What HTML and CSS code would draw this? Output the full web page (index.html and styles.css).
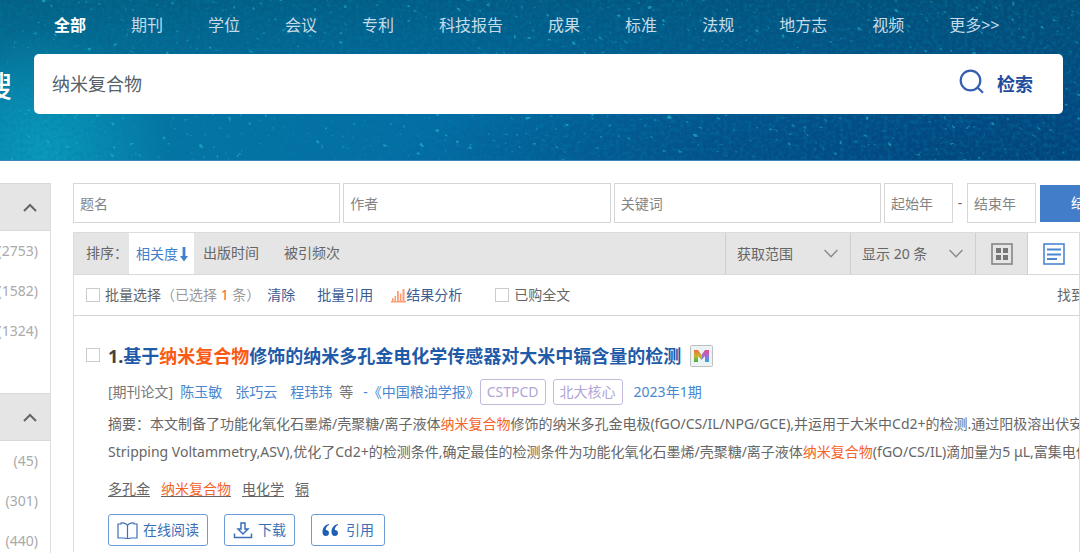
FILE: index.html
```html
<!DOCTYPE html>
<html lang="zh-CN">
<head>
<meta charset="utf-8">
<meta name="viewport" content="width=device-width, initial-scale=1">
<title>纳米复合物</title>
<link rel="stylesheet" href="styles.css">
</head>
<body>
<header class="hero">
  <svg class="hero-texture" aria-hidden="true">
    <filter id="specks" x="0" y="0" width="100%" height="100%">
      <feTurbulence type="fractalNoise" baseFrequency="0.16 0.24" numOctaves="2" seed="7"/>
      <feColorMatrix values="0 0 0 0 0.03  0 0 0 0 0.62  0 0 0 0 0.7  8 0 0 0 -5.5"/>
    </filter>
    <filter id="shade" x="0" y="0" width="100%" height="100%">
      <feTurbulence type="fractalNoise" baseFrequency="0.25" numOctaves="3" seed="3"/>
      <feColorMatrix values="0 0 0 0 0  0 0 0 0 0.2  0 0 0 0 0.38  0 1 0 0 -0.42"/>
    </filter>
    <rect width="100%" height="100%" filter="url(#shade)"/>
    <g transform="rotate(28)"><rect x="-50" y="-560" width="1300" height="900" filter="url(#specks)" opacity="0.5"/></g>
  </svg>
  <nav class="types">
    <a class="type type-active" href="#">全部</a>
    <a class="type" href="#">期刊</a>
    <a class="type" href="#">学位</a>
    <a class="type" href="#">会议</a>
    <a class="type" href="#">专利</a>
    <a class="type" href="#">科技报告</a>
    <a class="type" href="#">成果</a>
    <a class="type" href="#">标准</a>
    <a class="type" href="#">法规</a>
    <a class="type" href="#">地方志</a>
    <a class="type" href="#">视频</a>
    <a class="type" href="#">更多&gt;&gt;</a>
  </nav>
  <div class="search-row">
    <span class="search-label">搜</span>
    <form class="search-box">
      <input class="search-input" type="text" aria-label="检索词" value="纳米复合物">
      <button class="search-button" type="button">
        <svg width="26" height="26" viewBox="0 0 26 26" fill="none" stroke="#355fae" stroke-width="2.2"><circle cx="11.5" cy="11.5" r="9.8"/><path d="M18.5 18.5l5.5 5.3"/></svg>
        <span>检索</span>
      </button>
    </form>
  </div>
</header>

<div class="page">
  <aside class="sidebar">
    <section class="facet">
      <button class="facet-head" type="button" aria-label="收起">
        <svg width="14" height="9" viewBox="0 0 14 9" fill="none" stroke="#666" stroke-width="2"><path d="M1 8l6-6 6 6"/></svg>
      </button>
      <ul class="facet-list"><li>(2753)</li><li>(1582)</li><li>(1324)</li></ul>
    </section>
    <section class="facet">
      <button class="facet-head" type="button" aria-label="收起">
        <svg width="14" height="9" viewBox="0 0 14 9" fill="none" stroke="#666" stroke-width="2"><path d="M1 8l6-6 6 6"/></svg>
      </button>
      <ul class="facet-list"><li>(45)</li><li>(301)</li><li>(440)</li></ul>
    </section>
  </aside>

  <main class="main">
    <form class="refine">
      <input class="field" type="text" placeholder="题名" aria-label="题名">
      <input class="field" type="text" placeholder="作者" aria-label="作者">
      <input class="field" type="text" placeholder="关键词" aria-label="关键词">
      <input class="field field-year" type="text" placeholder="起始年" aria-label="起始年">
      <span class="dash">-</span>
      <input class="field field-year" type="text" placeholder="结束年" aria-label="结束年">
      <button class="refine-button" type="button">结果中检索</button>
    </form>

    <div class="panel">
      <div class="toolbar">
        <span class="sort-label">排序：</span>
        <a class="sort sort-active" href="#">相关度<svg width="8" height="16" viewBox="0 0 8 16" fill="#4080cc"><path d="M2.6 1h2.8v9H8l-4 5.5L0 10h2.6z"/></svg></a>
        <a class="sort" href="#">出版时间</a>
        <a class="sort" href="#">被引频次</a>
        <div class="toolbar-right">
          <div class="pick">
            <select aria-label="获取范围"><option>获取范围</option></select>
            <svg width="14" height="9" viewBox="0 0 14 9" fill="none" stroke="#8a8a8a" stroke-width="1.4"><path d="M.5 1L7 7.700l6.500-6.700"/></svg>
          </div>
          <div class="pick">
            <select aria-label="显示条数"><option>显示 20 条</option></select>
            <svg width="14" height="9" viewBox="0 0 14 9" fill="none" stroke="#8a8a8a" stroke-width="1.4"><path d="M.5 1L7 7.700l6.500-6.700"/></svg>
          </div>
          <button class="view" type="button" aria-label="网格">
            <svg width="22" height="22" viewBox="0 0 22 22"><rect x="1" y="1" width="20" height="20" fill="none" stroke="#858585" stroke-width="1.600"/><path fill="#777" d="M5 5h5v5H5zM12 5h5v5h-5zM5 12h5v5H5zM12 12h5v5h-5z"/></svg>
          </button>
          <button class="view view-active" type="button" aria-label="列表">
            <svg width="22" height="22" viewBox="0 0 22 22" fill="none" stroke="#4a86d2"><rect x="1" y="1" width="20" height="20" stroke-width="1.600"/><path stroke-width="2" d="M4 6.500h14M4 11.500h14M4 16h10"/></svg>
          </button>
        </div>
      </div>

      <div class="batch">
        <label class="check"><input type="checkbox"><span>批量选择</span></label>
        <span class="chosen">（已选择 <b>1</b> 条）</span>
        <a class="batch-link batch-clear" href="#">清除</a>
        <a class="batch-link batch-cite" href="#">批量引用</a>
        <a class="batch-link batch-stats" href="#"><svg width="15" height="15" viewBox="0 0 15 15" fill="#ff9b75"><path d="M0 13h15v1.500H0zM1 10h1.500v3H1zM3.500 8H5v5H3.500zM6 3h1.800v10H6zM8.800 5.500h1.600V13H8.800zM11.500 1h2v12h-2z"/></svg>结果分析</a>
        <label class="check check-owned"><input type="checkbox"><span>已购全文</span></label>
        <span class="found">找到</span>
      </div>

      <article class="result">
        <input class="result-check" type="checkbox" aria-label="选择">
        <div class="result-body">
          <h2 class="title"><span class="number">1.</span><a href="#">基于<em>纳米复合物</em>修饰的纳米多孔金电化学传感器对大米中镉含量的检测</a>
            <svg class="badge" width="23" height="22" viewBox="0 0 23 22"><defs><linearGradient id="warm" x1="0" y1="0" x2="0" y2="1"><stop stop-color="#f06a3c"/><stop offset=".5" stop-color="#c9b52c"/><stop offset="1" stop-color="#38b24a"/></linearGradient><linearGradient id="cool" x1="0" y1="0" x2="0" y2="1"><stop stop-color="#e04e8c"/><stop offset=".5" stop-color="#a66bd0"/><stop offset="1" stop-color="#27a9df"/></linearGradient></defs><rect x=".5" y=".5" width="22" height="21" rx="1" fill="#edf2f5" stroke="#bcc0c3"/><path fill="url(#warm)" d="M4 5h4l3.500 5v5L8 11v6H4z"/><path fill="url(#cool)" d="M19 5h-4l-3.500 5v5L15 11v6h4z"/></svg>
          </h2>
          <div class="meta">
            <span class="kind">[期刊论文]</span>
            <span class="authors"><a href="#">陈玉敏</a><a href="#">张巧云</a><a href="#">程玮玮</a></span>
            <span class="others">等</span>
            <a class="journal" href="#">-《中国粮油学报》</a>
            <span class="tag">CSTPCD</span>
            <span class="tag">北大核心</span>
            <a class="issue" href="#">2023年1期</a>
          </div>
          <p class="abstract">摘要：本文制备了功能化氧化石墨烯/壳聚糖/离子液体<em>纳米复合物</em>修饰的纳米多孔金电极(fGO/CS/IL/NPG/GCE),并运用于大米中Cd2+的检测.通过阳极溶出伏安法<br>Stripping Voltammetry,ASV),优化了Cd2+的检测条件,确定最佳的检测条件为功能化氧化石墨烯/壳聚糖/离子液体<em>纳米复合物</em>(fGO/CS/IL)滴加量为5 μL,富集电位</p>
          <div class="keywords"><a href="#">多孔金</a><a href="#"><em>纳米复合物</em></a><a href="#">电化学</a><a href="#">镉</a></div>
          <div class="actions">
            <button class="action" type="button"><svg width="21" height="17" viewBox="0 0 21 17" fill="none" stroke="#3a70b8" stroke-width="1.200"><path d="M10.500 3.500C9 1 5 .500 4 1v1H1v14h6c1.500 0 2.500.500 3.500 1 1-.500 2-1 3.500-1h6V2h-3V1c-1-.500-5 0-6.500 2.500zM10.500 3.500V16.500"/></svg>在线阅读</button>
            <button class="action" type="button"><svg width="20" height="17" viewBox="0 0 20 17" fill="none" stroke="#3a70b8" stroke-width="1.500"><path d="M8 1h4v6h3l-5 5-5-5h3zM1.500 11.500v4h17v-4"/></svg>下载</button>
            <button class="action action-cite" type="button"><svg width="17" height="14" viewBox="0 0 17 14" fill="#1f5fb4"><path d="M7 1C2.500 2 .500 5 .500 9c0 2.600 1.300 4 3.300 4 1.900 0 3.200-1.300 3.200-3.100C7 8 5.600 7 3.800 7 3.800 4.500 5 3 7 2z"/><path d="M16 1c-4.500 1-6.500 4-6.500 8 0 2.600 1.300 4 3.300 4 1.900 0 3.200-1.300 3.200-3.100C16 8 14.600 7 12.800 7c0-2.500 1.200-4 3.200-5z"/></svg>引用</button>
          </div>
        </div>
      </article>
    </div>
  </main>
</div>
</body>
</html>
```

FILE: styles.css
```css
* { box-sizing: border-box; }
body {
  margin: 0;
  overflow: hidden;
  background: #fff;
  color: #666;
  font: 14px/20px "Noto Sans", "Noto Sans CJK SC", sans-serif;
}
a { color: inherit; text-decoration: none; }
button, input, select { font: inherit; color: inherit; border-radius: 0; }
button { cursor: pointer; }
em { color: #f5632a; font-style: normal; }
svg { flex: none; }

.hero {
  position: relative;
  padding-bottom: 46px;
  border-bottom: 1px solid #3b86b4;
  background:
    radial-gradient(circle at 4% 96%, #0a9abb 0, rgba(10, 154, 187, 0) 12%),
    radial-gradient(ellipse at 100% 100%, #02447c 0, rgba(2, 68, 124, 0) 45%),
    linear-gradient(rgba(0, 76, 104, .5), rgba(0, 76, 104, 0) 70%),
    linear-gradient(90deg, #0678a2, #036da4 40%, #045a92 72%, #044c84);
}
.hero-texture { position: absolute; inset: 0; width: 100%; height: 100%; }
.types {
  position: relative;
  display: flex;
  gap: 45px;
  padding: 13px 0 17px 54px;
  color: #c5dce8;
  font-size: 16px;
  line-height: 24px;
  white-space: nowrap;
}
.type-active { color: #fff; font-weight: 700; }
.search-row { position: relative; display: flex; align-items: center; padding-right: 17px; }
.search-label {
  display: flex;
  justify-content: flex-end;
  flex: none;
  width: 12px;
  margin-right: 22px;
  padding-top: 4px;
  overflow: hidden;
  color: #fff;
  font-size: 30px;
  font-weight: 500;
  line-height: 40px;
}
.search-box { display: flex; flex: 1; height: 60px; overflow: hidden; border-radius: 5px; background: #fff; }
.search-input { flex: 1; min-width: 0; padding: 0 18px; border: 0; outline: 0; background: none; color: #555f69; font-size: 18px; }
.search-button {
  display: flex;
  align-items: center;
  gap: 12px;
  padding: 0 30px 0 20px;
  border: 0;
  background: none;
  color: #1f4c9c;
  font-size: 18px;
  font-weight: 700;
}
.search-button svg { margin-bottom: 4px; }

.page { display: flex; gap: 22px; padding-top: 22px; }
.sidebar { flex: none; width: 51px; border-right: 1px solid #ddd; }
.facet { min-height: 210px; }
.facet-head {
  display: flex;
  align-items: center;
  justify-content: flex-end;
  width: 100%;
  height: 48px;
  padding: 0 13px 0 0;
  border: 1px solid #d8d8d8;
  border-width: 1px 0;
  background: #e5e5e5;
}
.facet-list { margin: 0; padding: 0 12px 0 0; list-style: none; color: #aaa; }
.facet-list li { display: flex; justify-content: flex-end; line-height: 40px; }

.main { flex: 1; min-width: 0; }
.refine { display: flex; align-items: center; gap: 3px; overflow: hidden; }
.field { flex: 1; min-width: 0; height: 40px; padding: 0 6px; border: 1px solid #d6d6d6; outline: 0; background: #fff; }
.field::placeholder { color: #858585; opacity: 1; }
.field-year { flex: none; width: 69px; }
.dash { width: 8px; text-align: center; }
.refine-button {
  flex: none;
  width: 40px;
  height: 37px;
  margin-left: 1px;
  padding: 0 0 0 31px;
  overflow: hidden;
  border: 0;
  background: #427dca;
  color: #fff;
  text-align: left;
  white-space: nowrap;
}

.panel { margin-top: 9px; border: 1px solid #dcdcdc; border-width: 1px 1px 0; min-height: 320px; }
.toolbar { display: flex; align-items: stretch; height: 42px; padding-left: 12px; border-bottom: 1px solid #d9d9d9; background: #e5e5e5; white-space: nowrap; line-height: 40px; }
.sort-label { width: 43px; }
.sort { padding: 0 9px; margin-right: 7px; }
.sort-active { display: flex; align-items: center; gap: 2px; margin-right: 0; padding: 0 6px 0 7px; background: #fff; color: #4080cc; }
.toolbar-right { display: flex; margin-left: auto; }
.pick { display: grid; width: 125px; align-items: center; border-left: 1px solid #cfcfcf; }
.pick select { grid-area: 1 / 1; height: 40px; padding: 0 30px 0 11px; border: 0; outline: 0; background: none; appearance: none; }
.pick svg { grid-area: 1 / 1; justify-self: end; margin-right: 12px; pointer-events: none; }
.view { display: grid; place-items: center; width: 52px; padding: 0; border: 0; border-left: 1px solid #cfcfcf; background: none; }
.view-active { background: #fff; }

.batch { display: flex; align-items: center; height: 41px; padding-left: 12px; border-bottom: 1px solid #d6d6d6; white-space: nowrap; }
input[type="checkbox"] { flex: none; width: 14px; height: 14px; margin: 0; border: 1px solid #ccc; background: #fff; appearance: none; }
input[type="checkbox"]:checked { background: #427dca; }
.check { display: flex; align-items: center; gap: 5px; }
.check-owned { margin-left: 33px; }
.chosen { color: #999; }
.chosen b { color: #f5632a; font-weight: 400; }
.batch-link { display: flex; align-items: center; color: #3c5c94; }
.batch-clear { margin-left: 7px; }
.batch-cite { margin-left: 22px; }
.batch-stats { margin-left: 18px; }
.found { width: 22px; margin-left: auto; overflow: hidden; }

.result { display: flex; gap: 8px; padding: 27px 0 0 12px; }
.result .result-check { margin-top: 5px; }
.result-body { flex: 1; min-width: 0; }
.title { display: flex; align-items: center; margin: 0; color: #1f5ba8; font-size: 18px; line-height: 26px; white-space: nowrap; }
.title em { color: #fa5a14; }
.number { color: #444; }
.badge { margin-left: 9px; }
.meta { display: flex; align-items: center; height: 26px; margin-top: 10px; white-space: nowrap; color: #777; }
.meta a { color: #4a86cf; }
.authors { display: flex; gap: 13px; margin: 0 7px; }
.journal { margin-left: 10px; }
.tag { margin-right: 7px; padding: 2px 6px; border: 1px solid #c3b9de; border-radius: 3px; color: #b2a5d6; }
.issue { margin-left: 4px; }
.abstract { margin: 5px 0 0; line-height: 28px; white-space: nowrap; overflow: hidden; }
.keywords { display: flex; gap: 11px; margin-top: 13px; }
.keywords a { text-decoration: underline; text-underline-offset: 2px; }
.actions { display: flex; gap: 16px; margin-top: 15px; }
.action { display: flex; align-items: center; gap: 5px; height: 32px; padding: 0 8px; border: 1px solid #6d9bd8; border-radius: 3px; background: #fff; color: #3a70b8; }
.action-cite { gap: 7px; padding: 0 10px; }
```
